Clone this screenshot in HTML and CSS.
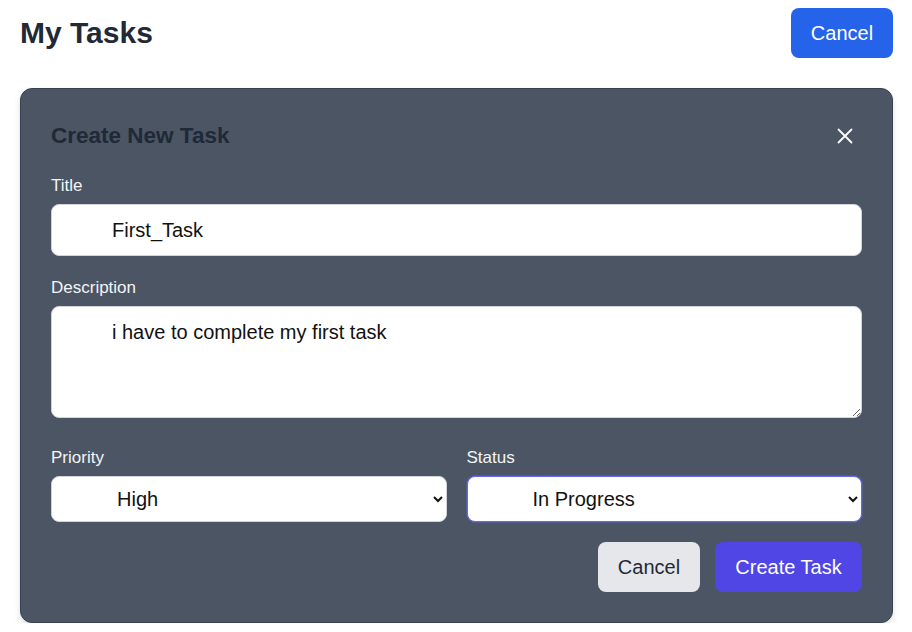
FILE: index.html
```html
<!DOCTYPE html>
<html>
<head>
<meta charset="utf-8">
<link rel="stylesheet" href="styles.css">
</head>
<body>
<div class="page">
  <header class="topbar">
    <h1 class="page-title">My Tasks</h1>
    <button class="btn btn-blue">Cancel</button>
  </header>
  <section class="panel">
    <div class="panel-head">
      <h2 class="panel-title">Create New Task</h2>
      <button class="close" aria-label="Close">
        <svg width="16" height="16" viewBox="0 0 16 16"><path d="M1.5 1.5 L14.5 14.5 M14.5 1.5 L1.5 14.5" stroke="#fff" stroke-width="1.8" stroke-linecap="round" fill="none"/></svg>
      </button>
    </div>
    <div class="field">
      <label class="label">Title</label>
      <input class="input" type="text" value="First_Task">
    </div>
    <div class="field">
      <label class="label">Description</label>
      <textarea class="input textarea">i have to complete my first task</textarea>
    </div>
    <div class="row">
      <div class="field">
        <label class="label">Priority</label>
        <select class="input select"><option>Low</option><option>Medium</option><option selected>High</option></select>
      </div>
      <div class="field">
        <label class="label">Status</label>
        <select class="input select focused"><option>To Do</option><option selected>In Progress</option><option>Done</option></select>
      </div>
    </div>
    <div class="actions">
      <button class="btn btn-gray">Cancel</button>
      <button class="btn btn-indigo">Create Task</button>
    </div>
  </section>
</div>
</body>
</html>
```

FILE: styles.css
```css
* { box-sizing: border-box; }
body {
  margin: 0;
  background: #ffffff;
  font-family: "Liberation Sans", Arial, sans-serif;
}
.page {
  padding: 8px 19px 0 20px;
}
.topbar {
  display: flex;
  justify-content: space-between;
  align-items: center;
  height: 50px;
}
.page-title {
  margin: 0;
  font-size: 30px;
  font-weight: 700;
  color: #1f2937;
}
.btn {
  border: none;
  border-radius: 8px;
  height: 50px;
  padding: 0;
  font-family: inherit;
  font-size: 20px;
  cursor: pointer;
}
.btn-blue { background: #2563eb; color: #fff; width: 102px; }
.btn-gray { background: #e5e7eb; color: #1f2937; width: 102px; }
.btn-indigo { background: #4f46e5; color: #fff; width: 147px; }
.panel {
  margin-top: 30px;
  background: #4b5563;
  border: 1px solid #374151;
  border-radius: 12px;
  padding: 30px;
  box-shadow: 0 4px 8px rgba(0,0,0,0.08), 0 2px 4px rgba(0,0,0,0.06);
}
.panel-head {
  display: flex;
  justify-content: space-between;
  align-items: center;
  height: 34px;
  margin-bottom: 21px;
}
.panel-title {
  margin: 0;
  font-size: 22.5px;
  font-weight: 700;
  color: #1f2937;
}
.close {
  background: none;
  border: none;
  padding: 0;
  margin-right: 9px;
  width: 16px;
  height: 16px;
  display: flex;
}
.field { margin-bottom: 20px; }
.label {
  display: block;
  font-size: 17px;
  line-height: 24px;
  font-weight: 500;
  color: #f3f4f6;
  margin-bottom: 6px;
}
.input {
  display: block;
  width: 100%;
  height: 52px;
  border: 1px solid #d1d5db;
  border-radius: 8px;
  background: #fff;
  padding: 0 12px 0 60px;
  font-family: inherit;
  font-size: 20px;
  color: #111;
  outline: none;
}
.textarea {
  height: 112px;
  padding-top: 13px;
  line-height: 24px;
  resize: vertical;
  margin-bottom: 28px;
}
.field:has(.textarea) { margin-bottom: 0; }
.row {
  display: grid;
  grid-template-columns: 1fr 1fr;
  gap: 20px;
}
.select {
  height: 46px;
  padding-left: 61px;
}
.focused {
  border-color: #6366f1;
  box-shadow: 0 0 0 1px rgba(99,102,241,0.35);
}
.actions {
  display: flex;
  justify-content: flex-end;
  gap: 15px;
}
```
